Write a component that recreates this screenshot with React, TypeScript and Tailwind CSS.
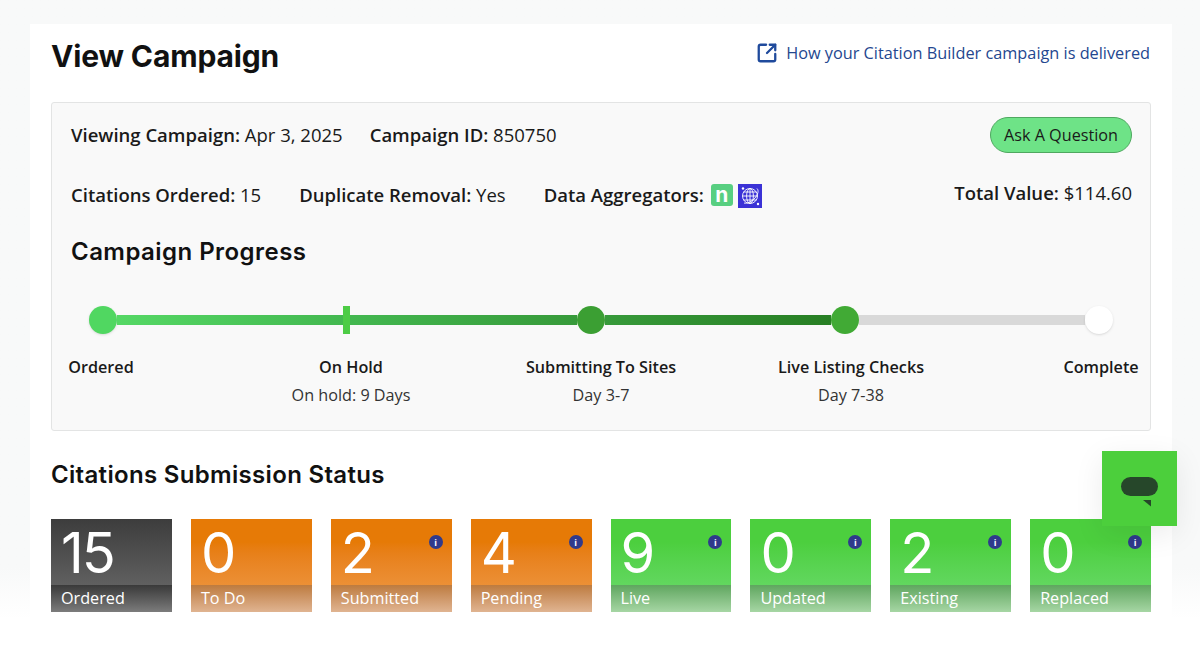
import { SquareArrowOutUpRight } from 'lucide-react';

const steps = [
  { title: 'Ordered', sub: '' },
  { title: 'On Hold', sub: 'On hold: 9 Days' },
  { title: 'Submitting To Sites', sub: 'Day 3-7' },
  { title: 'Live Listing Checks', sub: 'Day 7-38' },
  { title: 'Complete', sub: '' },
];

type Tile = { value: string; label: string; kind: 'dark' | 'orange' | 'green'; info?: boolean };

const tiles: Tile[] = [
  { value: '15', label: 'Ordered', kind: 'dark' },
  { value: '0', label: 'To Do', kind: 'orange' },
  { value: '2', label: 'Submitted', kind: 'orange', info: true },
  { value: '4', label: 'Pending', kind: 'orange', info: true },
  { value: '9', label: 'Live', kind: 'green', info: true },
  { value: '0', label: 'Updated', kind: 'green', info: true },
  { value: '2', label: 'Existing', kind: 'green', info: true },
  { value: '0', label: 'Replaced', kind: 'green', info: true },
];

const tileBg = {
  dark: 'bg-gradient-to-b from-[#3d3d3d] to-[#6f6f6f]',
  orange: 'bg-gradient-to-b from-[#e67a06] from-25% to-[#ef9d47]',
  green: 'bg-gradient-to-b from-[#4ccf3e] from-25% to-[#6edc70]',
};

const stripBg = {
  dark: 'bg-gradient-to-b from-[#3a3a3a] to-[#7c7c7c]',
  orange: 'bg-gradient-to-b from-[#bd7b3e] to-[#e0b491]',
  green: 'bg-gradient-to-b from-[#5fa65f] to-[#a6d6a4]',
};

function InfoDot() {
  return (
    <span className="absolute right-[9px] top-[16px] flex h-[14px] w-[14px] items-center justify-center rounded-full bg-[#2f3a8c] text-[9px] font-bold leading-none text-white">
      i
    </span>
  );
}

function StatusTile({ tile }: { tile: Tile }) {
  return (
    <div className={`relative flex h-[93px] flex-col justify-between text-white ${tileBg[tile.kind]}`}>
      <div className="pl-[10px] pt-[5px] font-['Inter',sans-serif] text-[56px] font-normal leading-[58px] tracking-[-2px]">{tile.value}</div>
      {tile.info && <InfoDot />}
      <div className={`h-[27px] pl-[10px] pt-[2px] text-[16.2px] leading-[22px] ${stripBg[tile.kind]}`}>{tile.label}</div>
    </div>
  );
}

function GlobeBadge() {
  return (
    <svg viewBox="0 0 24 24" className="h-[24px] w-[24px]">
      <rect width="24" height="24" fill="#3b32d6" />
      <g fill="none" stroke="#fff" strokeWidth="0.9">
        <circle cx="12" cy="12" r="7.5" />
        <ellipse cx="12" cy="12" rx="3.4" ry="7.5" />
        <path d="M4.5 12h15M5.6 8h12.8M5.6 16h12.8M12 4.5v15" />
        <path d="M19 4.5c2 2 1 6-2 9.5s-8 6-11 5" />
      </g>
      <circle cx="5" cy="4.5" r="1.2" fill="#fff" />
      <circle cx="20" cy="20" r="1.2" fill="#fff" />
    </svg>
  );
}

export default function App() {
  return (
    <div className="relative h-[645px] w-[1200px] overflow-hidden bg-gradient-to-b from-[#f8f9f9] from-[88%] to-white to-[96%] pt-[24px] font-['Open_Sans',sans-serif] text-[#1a1a1a]">
      <div className="ml-[30px] h-[621px] w-[1142px] bg-white px-[21px]">
        <div className="flex items-center justify-between pt-[12px]">
          <h1 className="font-['Inter',sans-serif] text-[30px] font-bold leading-[40px] tracking-[-0.15px] text-[#111]">View Campaign</h1>
          <a className="-mt-[7px] flex items-center gap-[8px] pr-[1px] text-[16.3px] leading-[22px] text-[#24478f]">
            <SquareArrowOutUpRight size={22} strokeWidth={2.5} className="text-[#1f4a9c]" />
            How your Citation Builder campaign is delivered
          </a>
        </div>

        <section className="mt-[26px] h-[329px] rounded-[3px] border border-[#e3e4e4] bg-[#f9f9f9] pl-[19px] pr-[18px]">
          <div className="flex h-[64px] items-center justify-between">
            <div className="flex gap-[27px] text-[18.5px]">
              <p><b className="font-semibold">Viewing Campaign:</b> Apr 3, 2025</p>
              <p><b className="font-semibold">Campaign ID:</b> 850750</p>
            </div>
            <button className="h-[36px] w-[142px] rounded-full border border-[#4fa860] bg-[#6ee387] text-[16.2px] text-[#1a1a1a]">Ask A Question</button>
          </div>

          <div className="mt-[14px] flex items-center justify-between text-[18.5px]">
            <div className="flex items-center gap-[38px]">
              <p><b className="font-semibold">Citations Ordered:</b> 15</p>
              <p><b className="font-semibold">Duplicate Removal:</b> Yes</p>
              <div className="flex items-center">
                <b className="font-semibold">Data Aggregators:</b>
                <span className="ml-[7px] flex h-[22px] w-[22px] items-center justify-center rounded-[3px] bg-[#58cf81] font-['Inter',sans-serif] text-[21px] font-bold leading-none text-white">n</span>
                <span className="ml-[5px] mt-[2px]"><GlobeBadge /></span>
              </div>
            </div>
            <p className="-mt-[4px]"><b className="font-semibold">Total Value:</b> $114.60</p>
          </div>

          <h2 className="mt-[27px] font-['Inter',sans-serif] text-[24px] font-semibold leading-[32px] tracking-[0.45px] text-[#111]">Campaign Progress</h2>

          <div className="ml-[18px] mr-[19px] mt-[38px] flex items-center">
            <span className="h-[28px] w-[28px] shrink-0 rounded-full bg-[#50d761] shadow-sm" />
            <span className="h-[10px] flex-1 bg-gradient-to-r from-[#55d865] to-[#43b850]" />
            <span className="h-[28px] w-[7px] shrink-0 bg-[#4dcc46]" />
            <span className="h-[10px] flex-1 bg-gradient-to-r from-[#43b850] to-[#379a3a]" />
            <span className="h-[28px] w-[28px] shrink-0 rounded-full bg-[#3b9f33]" />
            <span className="h-[10px] flex-1 bg-gradient-to-r from-[#379a3a] to-[#287f24]" />
            <span className="h-[28px] w-[28px] shrink-0 rounded-full bg-[#41aa35]" />
            <span className="h-[10px] flex-1 bg-[#d9d9d9]" />
            <span className="h-[28px] w-[28px] shrink-0 rounded-full bg-white shadow" />
          </div>

          <div className="-ml-[50px] -mr-[49px] mt-[22px] flex justify-between text-center text-[16.2px] leading-[22px]">
            {steps.map(s => (
              <div key={s.title} className="w-[160px]">
                <p className="whitespace-nowrap font-semibold">{s.title}</p>
                {s.sub && <p className="mt-[6px] whitespace-nowrap text-[#333]">{s.sub}</p>}
              </div>
            ))}
          </div>
        </section>

        <h2 className="mt-[28px] font-['Inter',sans-serif] text-[24px] font-semibold leading-[32px] tracking-[0.32px] text-[#111]">Citations Submission Status</h2>

        <div className="mt-[28px] grid w-[1100px] grid-cols-8 gap-x-[19px]">
          {tiles.map(t => (
            <StatusTile key={t.label} tile={t} />
          ))}
        </div>
      </div>

      <button className="absolute left-[1102px] top-[451px] h-[75px] w-[75px] bg-[#4ccf3c] shadow-[0_8px_30px_rgba(0,0,0,0.08)]">
        <svg viewBox="0 0 75 75" className="h-[75px] w-[75px]">
          <rect x="19" y="26" width="37" height="19" rx="9.5" fill="#26472a" />
          <path d="M41 49h8v6.5z" fill="#26472a" />
        </svg>
      </button>
    </div>
  );
}
